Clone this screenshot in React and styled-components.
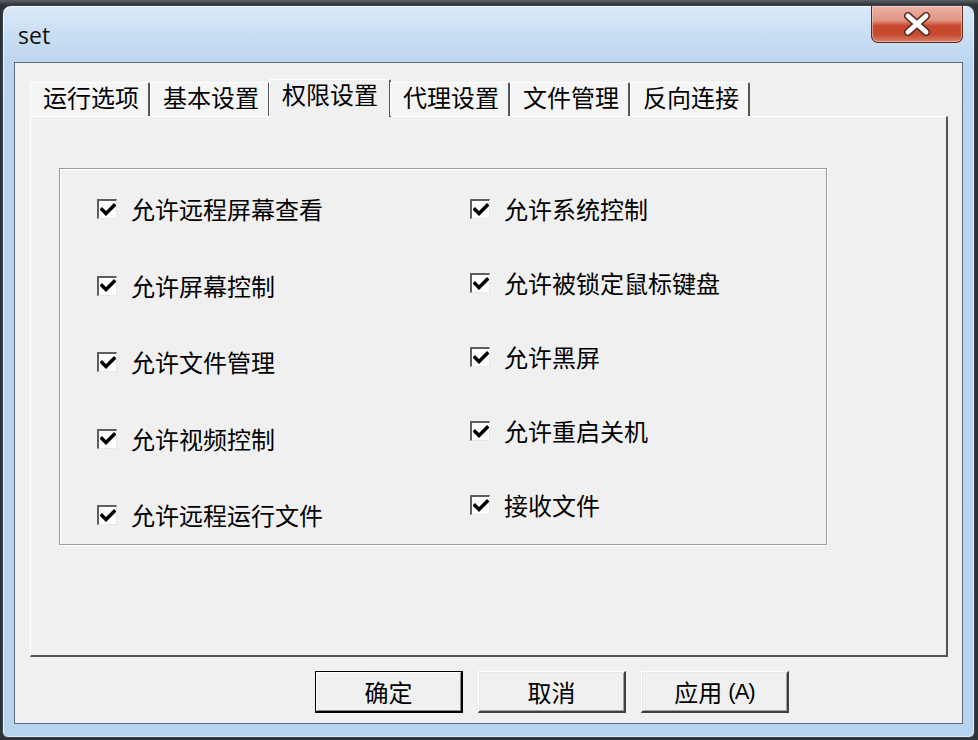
import React from "react";
import styled, { createGlobalStyle } from "styled-components";

const Global = createGlobalStyle`
  html, body { margin: 0; padding: 0; }
  body {
    width: 978px;
    height: 740px;
    overflow: hidden;
    background: #3d4247;
    font-family: "Noto Sans CJK SC", "Noto Sans", sans-serif;
  }
`;

const Desk = styled.div`
  width: 978px;
  height: 740px;
  padding: 5px 0 0 2px;
  box-sizing: border-box;
  background: linear-gradient(180deg, #5b6166 0px, #2e3236 5px, #2e3236 100%);
`;

const Window = styled.div`
  width: 973px;
  height: 733px;
  box-sizing: border-box;
  border: 1px solid #3a4450;
  border-radius: 9px 9px 6px 6px;
  background: linear-gradient(180deg, #d9e9f8 0px, #c9def3 30px, #bad5ee 60px, #b7d3ee 100%);
  box-shadow: inset 1px 1px 0 rgba(255,255,255,0.7), inset -1px -1px 0 rgba(255,255,255,0.5);
  padding: 0 11px 13px 11px;
  display: flex;
  flex-direction: column;
`;

const TitleBar = styled.div`
  height: 56px;
  display: flex;
  align-items: flex-start;
`;

const Title = styled.div`
  font-family: "Open Sans", "Noto Sans", sans-serif;
  font-size: 23px;
  color: #111;
  padding: 13px 0 0 4px;
`;

const CloseBtn = styled.div`
  margin-left: auto;
  width: 92px;
  height: 37px;
  box-sizing: border-box;
  border: 1px solid #5a2c24;
  border-top: none;
  border-radius: 0 0 7px 7px;
  background: linear-gradient(180deg, #ecb3a6 0%, #e09583 40%, #c9472d 55%, #c64b30 80%, #d9826a 100%);
  box-shadow: inset 0 0 0 1px rgba(255,220,210,0.5);
  display: flex;
  align-items: center;
  justify-content: center;
`;

const Client = styled.div`
  flex: 1;
  box-sizing: border-box;
  border: 1px solid #5e6b78;
  background: #f0f0f0;
  padding: 15px 0 0 15px;
  display: flex;
  flex-direction: column;
`;

const TabStrip = styled.div`
  display: flex;
  align-items: flex-end;
  height: 38px;
  position: relative;
  z-index: 2;
`;

const Tab = styled.div`
  width: ${(p) => (p.$active ? 122 : 120)}px;
  height: ${(p) => (p.$active ? 38 : 34)}px;
  margin: ${(p) => (p.$active ? "0 -1px -1px -1px" : "0")};
  box-sizing: border-box;
  background: ${(p) => (p.$active ? "#f0f0f0" : "#f5f5f5")};
  border-top: 1px solid #ffffff;
  border-left: 1px solid #ffffff;
  border-right: 2px solid #555;
  border-top-right-radius: 2px;
  font-size: 24px;
  line-height: 1;
  color: #000;
  display: flex;
  align-items: center;
  padding-left: 12px;
  padding-bottom: ${(p) => (p.$active ? "10px" : "5px")};
`;

const Panel = styled.div`
  width: 918px;
  height: 541px;
  box-sizing: border-box;
  border-top: 1px solid #ffffff;
  border-left: 1px solid #ffffff;
  border-right: 2px solid #555;
  border-bottom: 2px solid #555;
  background: #f0f0f0;
  padding: 51px 0 0 28px;
`;

const Group = styled.div`
  width: 768px;
  height: 377px;
  box-sizing: border-box;
  border: 1px solid #9a9a9a;
  box-shadow: 1px 1px 0 #ffffff, inset 1px 1px 0 #ffffff;
  padding: 23px 0 0 37px;
  display: grid;
  grid-template-columns: 373px 1fr;
  align-items: start;
`;

const Column = styled.div`
  display: flex;
  flex-direction: column;
  gap: ${(p) => p.$gap}px;
`;

const Row = styled.div`
  display: flex;
  align-items: center;
  height: 34px;
  gap: 14px;
`;

const Box = styled.div`
  width: 20px;
  height: 20px;
  box-sizing: border-box;
  background: #ffffff;
  border-top: 2px solid #5e5e5e;
  border-left: 2px solid #5e5e5e;
  border-right: 1px solid #e6e6e6;
  border-bottom: 1px solid #e6e6e6;
  display: flex;
  align-items: center;
  justify-content: center;
  flex: none;
`;

const Label = styled.span`
  font-size: 24px;
  line-height: 34px;
  color: #000;
  white-space: nowrap;
`;

const ButtonRow = styled.div`
  display: flex;
  gap: 15px;
  padding: 14px 0 0 285px;
`;

const Button = styled.div`
  width: 148px;
  height: 42px;
  box-sizing: border-box;
  background: #f0f0f0;
  font-size: 24px;
  color: #000;
  display: flex;
  align-items: center;
  justify-content: center;
  border-style: solid;
  border-color: ${(p) => (p.$default ? "#000" : "#ffffff #404040 #404040 #ffffff")};
  border-width: 1px 2px 2px 1px;
  box-shadow: ${(p) =>
    p.$default
      ? "inset 1px 1px 0 #ffffff, inset -1px -1px 0 #8a8a8a"
      : "inset 1px 1px 0 #e8e8e8, inset -1px -1px 0 #a0a0a0"};
`;

const Paren = styled.span`
  font-family: "Liberation Sans", sans-serif;
  font-size: 22px;
  margin-left: 6px;
  letter-spacing: -1px;
`;

const Check = () => (
  <svg width="16" height="16" viewBox="0 0 16 16">
    <path d="M2 7.5 L6 11.5 L14 3.5" stroke="#000" strokeWidth="3.4" fill="none" strokeLinecap="square" />
  </svg>
);

const CloseX = () => (
  <svg width="30" height="24" viewBox="0 0 30 24">
    <path d="M6 4 L24 20 M24 4 L6 20" stroke="#5a2b22" strokeWidth="8" strokeLinecap="round" />
    <path d="M6 4 L24 20 M24 4 L6 20" stroke="#ffffff" strokeWidth="5" strokeLinecap="round" />
  </svg>
);

const tabs = ["运行选项", "基本设置", "权限设置", "代理设置", "文件管理", "反向连接"];
const left = ["允许远程屏幕查看", "允许屏幕控制", "允许文件管理", "允许视频控制", "允许远程运行文件"];
const right = ["允许系统控制", "允许被锁定鼠标键盘", "允许黑屏", "允许重启关机", "接收文件"];

export default function App() {
  return (
    <>
      <Global />
      <Desk>
        <Window>
          <TitleBar>
            <Title>set</Title>
            <CloseBtn>
              <CloseX />
            </CloseBtn>
          </TitleBar>
          <Client>
            <TabStrip>
              {tabs.map((t, i) => (
                <Tab key={t} $active={i === 2}>
                  {t}
                </Tab>
              ))}
            </TabStrip>
            <Panel>
              <Group>
                <Column $gap={42.5}>
                  {left.map((l) => (
                    <Row key={l}>
                      <Box>
                        <Check />
                      </Box>
                      <Label>{l}</Label>
                    </Row>
                  ))}
                </Column>
                <Column $gap={40}>
                  {right.map((l) => (
                    <Row key={l}>
                      <Box>
                        <Check />
                      </Box>
                      <Label>{l}</Label>
                    </Row>
                  ))}
                </Column>
              </Group>
            </Panel>
            <ButtonRow>
              <Button $default>确定</Button>
              <Button>取消</Button>
              <Button>
                应用<Paren>(A)</Paren>
              </Button>
            </ButtonRow>
          </Client>
        </Window>
      </Desk>
    </>
  );
}
